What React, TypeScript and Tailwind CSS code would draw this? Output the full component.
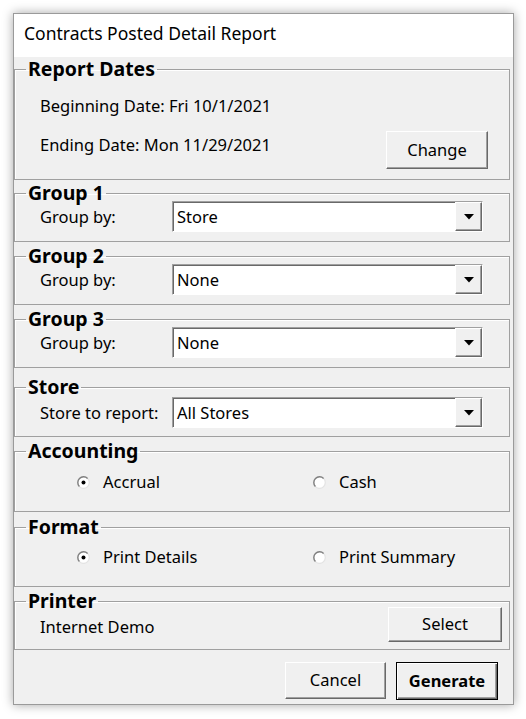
import type { ReactNode } from 'react';

// classic raised 3D button face
const raised =
  'bg-[#f0f0f0] border border-t-white border-l-white border-r-[#696969] border-b-[#696969] shadow-[inset_-1px_-1px_0_#a0a0a0]';

function Group({ title, className, children }: { title: string; className: string; children: ReactNode }) {
  return (
    <fieldset className={'mr-[3px] border border-[#a0a0a0] shadow-[inset_1px_1px_0_#fff] ' + className}>
      <legend className="ml-[11px] px-[2px] text-[19.5px] leading-[16px] font-bold text-black">{title}</legend>
      {children}
    </fieldset>
  );
}

function Combo({ value }: { value: string }) {
  return (
    <div className="flex h-[31px] w-[311px] border border-t-[#a0a0a0] border-l-[#a0a0a0] border-r-white border-b-white bg-white shadow-[inset_1px_1px_0_#696969]">
      <div className="flex-1 pl-[4px] pt-[1px] leading-[28px]">{value}</div>
      <div className={'flex w-[27px] items-center justify-center ' + raised}>
        <svg width="10" height="6" viewBox="0 0 10 6">
          <path d="M0 0H10L5 5.5Z" fill="#000" />
        </svg>
      </div>
    </div>
  );
}

function Radio({ label, checked, className }: { label: string; checked?: boolean; className: string }) {
  return (
    <div className={'flex items-center gap-[13px] ' + className}>
      <svg width="13" height="13" viewBox="0 0 13 13">
        <circle cx="6.5" cy="6.5" r="5.8" fill="#fff" stroke="#e3e3e3" strokeWidth="1.2" />
        <path d="M2.4 10.6A5.8 5.8 0 0 1 10.6 2.4" fill="none" stroke="#808080" strokeWidth="1.4" />
        {checked && <circle cx="6.5" cy="6.5" r="2" fill="#000" />}
      </svg>
      <span className="leading-5">{label}</span>
    </div>
  );
}

function GroupBy({ title, value, className }: { title: string; value: string; className: string }) {
  return (
    <Group title={title} className={className}>
      <div className="flex items-center pl-[25px] pb-[9px]">
        <div className="w-[132px] leading-5">Group by:</div>
        <Combo value={value} />
      </div>
    </Group>
  );
}

export default function App() {
  return (
    <div className="min-h-screen bg-white pl-[13px] pt-[13px] font-['Noto_Sans','Liberation_Sans',sans-serif] text-[16.5px] text-black">
      <div className="w-[501px] border border-[#9a9a9a] bg-[#f0f0f0] shadow-[0_0_10px_rgba(0,0,0,0.35)]">
        <div className="h-[43px] bg-white pl-[10px] pt-[7px] text-[17.5px] leading-6">Contracts Posted Detail Report</div>

        <div className="pt-[4px]">
          <Group title="Report Dates" className="">
            <div className="pl-[25px] pr-[21px] pt-[19px] pb-[10px]">
              <div className="leading-5">Beginning Date: Fri 10/1/2021</div>
              <div className="mt-[15px] flex items-start justify-between">
                <div className="mt-1 leading-5">Ending Date: Mon 11/29/2021</div>
                <button className={'h-[38px] w-[102px] ' + raised}>Change</button>
              </div>
            </div>
          </Group>

          <GroupBy title="Group 1" value="Store" className="mt-[5px]" />
          <GroupBy title="Group 2" value="None" className="mt-[6px]" />
          <GroupBy title="Group 3" value="None" className="mt-[6px]" />

          <Group title="Store" className="mt-[11px]">
            <div className="mt-[2px] flex items-center pl-[25px] pb-[8px]">
              <div className="w-[132px] leading-5">Store to report:</div>
              <Combo value="All Stores" />
            </div>
          </Group>

          <Group title="Accounting" className="mt-[6px]">
            <div className="mt-[13px] flex pl-[62px] pb-[19px]">
              <Radio label="Accrual" checked className="w-[236px]" />
              <Radio label="Cash" className="" />
            </div>
          </Group>

          <Group title="Format" className="mt-[7px]">
            <div className="mt-[12px] flex pl-[62px] pb-[19px]">
              <Radio label="Print Details" checked className="w-[236px]" />
              <Radio label="Print Summary" className="" />
            </div>
          </Group>

          <Group title="Printer" className="mt-[6px]">
            <div className="flex items-start justify-between pl-[25px] pr-[7px] pb-[7px]">
              <div className="mt-[8px] leading-5">Internet Demo</div>
              <button className={'-mt-[2px] h-[35px] w-[114px] ' + raised}>Select</button>
            </div>
          </Group>

          <div className="flex justify-end gap-[10px] pr-[15px] pt-[12px] pb-[4px]">
            <button className={'h-[37px] w-[101px] ' + raised}>Cancel</button>
            <button className="h-[38px] w-[102px] border border-black bg-[#f0f0f0] font-bold shadow-[inset_1px_1px_0_#fff,inset_-1px_-1px_0_#696969,inset_-2px_-2px_0_#a0a0a0]">
              Generate
            </button>
          </div>
        </div>
      </div>
    </div>
  );
}
